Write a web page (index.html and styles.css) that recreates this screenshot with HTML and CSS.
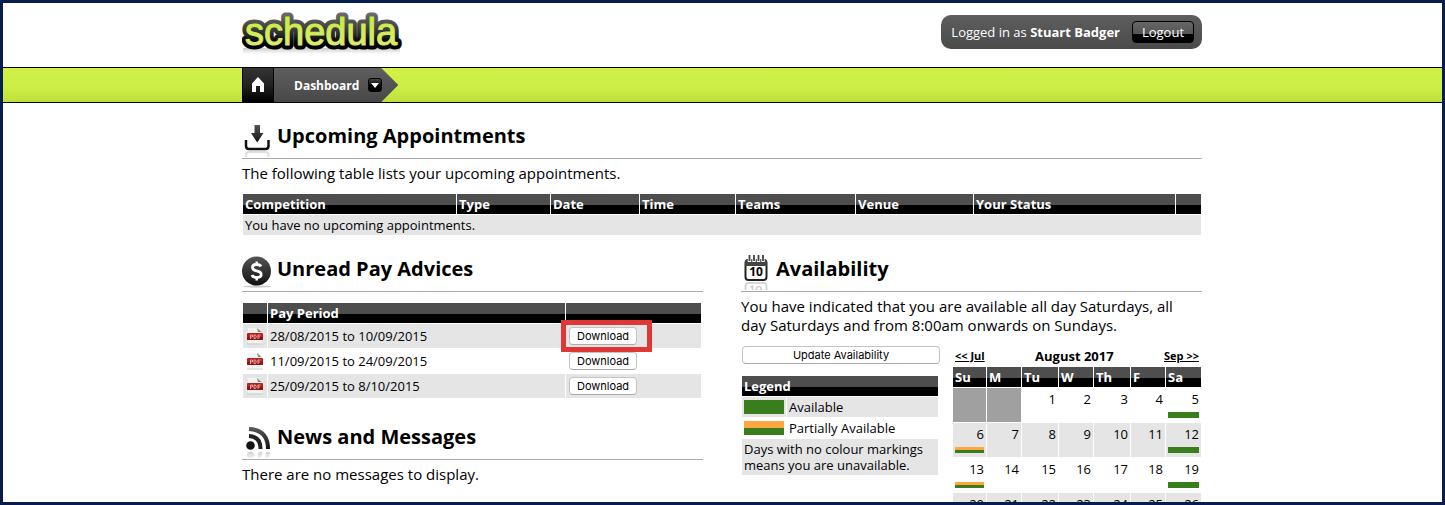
FILE: index.html
```
<!DOCTYPE html>
<html lang="en">
<head>
<meta charset="UTF-8">
<meta name="viewport" content="width=device-width, initial-scale=1.0">
<title>Schedula - Dashboard</title>
<link rel="stylesheet" href="styles.css">
</head>
<body>

<header class="header">
    <div class="wrap header-inner">
        <a class="logo" href="#" aria-label="schedula">
            <svg width="162" height="44" viewBox="0 0 162 44">
                <defs>
                    <linearGradient id="outline" gradientUnits="userSpaceOnUse" x1="0" y1="2" x2="0" y2="38">
                        <stop offset="0" stop-color="#6a6a6a"/>
                        <stop offset="0.5" stop-color="#333"/>
                        <stop offset="0.8" stop-color="#000"/>
                    </linearGradient>
                    <linearGradient id="lime" gradientUnits="userSpaceOnUse" x1="0" y1="6" x2="0" y2="33">
                        <stop offset="0" stop-color="#c8ee3c"/>
                        <stop offset="1" stop-color="#dbe873"/>
                    </linearGradient>
                    <linearGradient id="shade" x1="0" y1="0" x2="0" y2="1">
                        <stop offset="0" stop-color="#999"/>
                        <stop offset="1" stop-color="#fff"/>
                    </linearGradient>
                </defs>
                <rect x="1" y="36" width="157" height="6" fill="url(#shade)" opacity="0.5"/>
                <text class="logo-text logo-outline" x="3" y="33">schedula</text>
                <text class="logo-text logo-fill" x="3" y="33">schedula</text>
            </svg>
        </a>
        <div class="user-box">
            <span>Logged in as <b>Stuart Badger</b></span>
            <button class="logout">Logout</button>
        </div>
    </div>
</header>

<nav class="nav">
    <div class="wrap nav-inner">
        <a class="home" href="#" aria-label="Home">
            <svg width="12" height="16" viewBox="0 0 12 16"><path d="M6 0 12 6.500V15H8V9H4V15H0V6.500z" fill="#fff"/></svg>
        </a>
        <div class="crumb">
            <a href="#">Dashboard</a>
            <button class="drop" aria-label="Open menu">
                <svg width="8" height="5" viewBox="0 0 8 5"><path d="M0 0H8L4 5z" fill="#fff"/></svg>
            </button>
        </div>
    </div>
</nav>

<main class="wrap">
    <h2>
        <svg class="icon" width="30" height="35" viewBox="0 0 30 35">
            <defs>
                <linearGradient id="dark" x1="0" y1="0" x2="0" y2="1">
                    <stop offset="0" stop-color="#555"/>
                    <stop offset="1" stop-color="#111"/>
                </linearGradient>
                <linearGradient id="fade" x1="0" y1="0" x2="0" y2="1">
                    <stop offset="0" stop-color="#ccc"/>
                    <stop offset="1" stop-color="#f4f4f4"/>
                </linearGradient>
            </defs>
            <path d="M12.500 3H18V11H21.500L15.200 20.500 9 11H12.500z" fill="url(#dark)"/>
            <path d="M4 18V24Q4 27 7 27H23.500Q26.500 27 26.500 24V18" fill="none" stroke="#111" stroke-width="2.500"/>
            <path d="M4 35V33Q4 30 7 30H23.500Q26.500 30 26.500 33V35" fill="none" stroke="#ddd" stroke-width="2"/>
        </svg>
        Upcoming Appointments
    </h2>
    <p>The following table lists your upcoming appointments.</p>
    <table class="grid appointments">
        <colgroup>
            <col class="c-comp"><col class="c-type"><col class="c-date"><col class="c-time"><col class="c-teams"><col class="c-venue"><col class="c-status"><col>
        </colgroup>
        <thead>
            <tr><th>Competition</th><th>Type</th><th>Date</th><th>Time</th><th>Teams</th><th>Venue</th><th>Your Status</th><th></th></tr>
        </thead>
        <tbody>
            <tr class="odd"><td colspan="8">You have no upcoming appointments.</td></tr>
        </tbody>
    </table>

    <div class="columns">
        <div class="column">
            <section>
                <h2>
                    <svg class="icon" width="30" height="35" viewBox="0 0 30 35">
                        <ellipse cx="15" cy="31.500" rx="14" ry="1.200" fill="#ccc"/>
                        <circle cx="14.500" cy="16" r="14.500" fill="url(#dark)"/>
                        <path d="M19 11.500Q18 9.500 14.700 9.500 10.500 9.500 10.500 12.500 10.500 15 14.700 15.800 19.200 16.700 19.200 19.500 19.200 22.500 14.700 22.500 11 22.500 10 20" fill="none" stroke="#fff" stroke-width="2.800"/>
                        <path d="M14.700 6.500V10M14.700 22V25.500" stroke="#fff" stroke-width="2.400"/>
                    </svg>
                    Unread Pay Advices
                </h2>
                <table class="grid pay">
                    <colgroup><col class="c-icon"><col><col class="c-action"></colgroup>
                    <thead>
                        <tr><th></th><th>Pay Period</th><th></th></tr>
                    </thead>
                    <tbody>
                        <tr class="odd">
                            <td>
                                <svg class="pdf" width="18" height="18" viewBox="0 0 18 18">
                                    <defs>
                                        <g id="pdf">
                                            <path d="M2 1H12L16 5V16H2z" fill="#f3f3f3"/>
                                            <path d="M11 1 15.500 5H12z" fill="#888"/>
                                            <path d="M1 17H17" stroke="#ccc"/>
                                            <rect x="1" y="6" width="16" height="7" rx="1" fill="#b5201b"/>
                                            <path d="M1 10H17V12Q17 13 16 13H2Q1 13 1 12z" fill="#8d1512"/>
                                            <path d="M4.500 12V8H6.500V10H4.500M8 8V11.500H9.500L10.300 9.800 9.500 8zM12 12V8H14.500M12 10H14" fill="none" stroke="#e0a5a2"/>
                                        </g>
                                    </defs>
                                    <use href="#pdf"/>
                                </svg>
                            </td>
                            <td>28/08/2015 to 10/09/2015</td>
                            <td class="action"><button class="btn">Download</button><span class="highlight"></span></td>
                        </tr>
                        <tr>
                            <td><svg class="pdf" width="18" height="18" viewBox="0 0 18 18"><use href="#pdf"/></svg></td>
                            <td>11/09/2015 to 24/09/2015</td>
                            <td class="action"><button class="btn">Download</button></td>
                        </tr>
                        <tr class="odd">
                            <td><svg class="pdf" width="18" height="18" viewBox="0 0 18 18"><use href="#pdf"/></svg></td>
                            <td>25/09/2015 to 8/10/2015</td>
                            <td class="action"><button class="btn">Download</button></td>
                        </tr>
                    </tbody>
                </table>
            </section>

            <section>
                <h2>
                    <svg class="icon" width="30" height="35" viewBox="0 0 30 35">
                        <circle cx="8.500" cy="22.500" r="4.300" fill="#111"/>
                        <path d="M7 13Q18.500 13.500 18.500 26" fill="none" stroke="#222" stroke-width="4"/>
                        <path d="M7 6Q26 7 26 26" fill="none" stroke="url(#dark)" stroke-width="4"/>
                        <path d="M4.500 33Q5 28.500 8.500 28.500 12 28.500 12.500 33L11 35H6zM16.500 29H20.500L19 35H15.500zM24 29H28L27 35H23z" fill="url(#fade)"/>
                    </svg>
                    News and Messages
                </h2>
                <p>There are no messages to display.</p>
            </section>
        </div>

        <div class="column">
            <h2>
                <svg class="icon" width="30" height="35" viewBox="0 0 30 35">
                    <rect x="4.500" y="5" width="21" height="20" rx="3" fill="#fff" stroke="#222" stroke-width="2"/>
                    <path d="M4 11V7Q4 4 7 4H23Q26 4 26 7V11z" fill="#444"/>
                    <path d="M8.500 1V7M13 1V7M17.500 1V7M22 1V7" stroke="#fff" stroke-width="3.400"/>
                    <path d="M8.500 0V6M13 0V6M17.500 0V6M22 0V6" stroke="#444" stroke-width="1.800"/>
                    <text class="day-text" x="15" y="21" text-anchor="middle">10</text>
                    <path d="M4.500 35V31Q4.500 28 7 28H23Q25.500 28 25.500 31V35M9.500 32 11.500 31V35M15.500 35V33.500Q15.500 31.500 17.800 31.500T20 33.500V35" fill="none" stroke="#ccc" stroke-width="1.600"/>
                </svg>
                Availability
            </h2>
            <p class="summary">You have indicated that you are available all day Saturdays, all day Saturdays and from 8:00am onwards on Sundays.</p>
            <div class="availability">
                <div class="legend">
                    <button class="btn wide">Update Availability</button>
                    <table class="grid">
                        <colgroup><col class="c-swatch"><col></colgroup>
                        <thead>
                            <tr><th colspan="2">Legend</th></tr>
                        </thead>
                        <tbody>
                            <tr class="odd"><td class="key"><span class="swatch full"></span></td><td>Available</td></tr>
                            <tr><td class="key"><span class="swatch part"></span></td><td>Partially Available</td></tr>
                            <tr class="odd"><td class="note" colspan="2">Days with no colour markings means you are unavailable.</td></tr>
                        </tbody>
                    </table>
                </div>
                <div class="calendar">
                    <div class="month">
                        <a href="#">&lt;&lt; Jul</a>
                        <h3>August 2017</h3>
                        <a href="#">Sep &gt;&gt;</a>
                    </div>
                    <table class="grid days">
                        <colgroup><col class="d33"><col class="d34"><col class="d36"><col class="d34"><col class="d36"><col class="d34"><col></colgroup>
                        <thead>
                            <tr><th>Su</th><th>M</th><th>Tu</th><th>W</th><th>Th</th><th>F</th><th>Sa</th></tr>
                        </thead>
                        <tbody>
                            <tr><td class="blank"></td><td class="blank"></td><td>1</td><td>2</td><td>3</td><td>4</td><td>5<span class="bar full"></span></td></tr>
                            <tr class="odd"><td>6<span class="bar part"></span></td><td>7</td><td>8</td><td>9</td><td>10</td><td>11</td><td>12<span class="bar full"></span></td></tr>
                            <tr><td>13<span class="bar part"></span></td><td>14</td><td>15</td><td>16</td><td>17</td><td>18</td><td>19<span class="bar full"></span></td></tr>
                            <tr class="odd"><td>20<span class="bar part"></span></td><td>21</td><td>22</td><td>23</td><td>24</td><td>25</td><td>26<span class="bar full"></span></td></tr>
                        </tbody>
                    </table>
                </div>
            </div>
        </div>
    </div>
</main>

</body>
</html>
```
FILE: styles.css
```
* {
    box-sizing: border-box;
}

body {
    margin: 0;
    height: 100vh;
    overflow: hidden;
    border: 3px solid #071d4f;
    background: #fff;
    color: #000;
    font-family: "Trebuchet MS", "Open Sans", sans-serif;
    font-size: 15px;
    line-height: 19px;
}

a {
    color: inherit;
}

button {
    font-family: inherit;
    cursor: pointer;
}

.wrap {
    max-width: 961px;
    margin: 0 auto;
    padding-right: 1px;
}

/* header */
.header-inner {
    display: flex;
    justify-content: space-between;
    align-items: flex-start;
    height: 64px;
    padding-top: 9px;
}

.logo svg {
    display: block;
}

.logo-text {
    font-family: "Liberation Sans", Arial, sans-serif;
    font-size: 38px;
    stroke-linejoin: round;
}

.logo-outline {
    fill: url(#outline);
    stroke: url(#outline);
    stroke-width: 9px;
}

.logo-fill {
    fill: url(#lime);
    stroke: url(#lime);
    stroke-width: 1px;
}

.user-box {
    display: flex;
    align-items: center;
    gap: 12px;
    height: 34px;
    margin-top: 3px;
    padding: 0 8px 0 10px;
    border-radius: 10px;
    background: linear-gradient(#5e5e5e, #4a4a4a);
    color: #fff;
    font-size: 13px;
}

.logout {
    width: 62px;
    height: 22px;
    padding: 0;
    border: 1px solid #000;
    border-radius: 4px;
    background: linear-gradient(#666, #555 60%, #000 60%);
    color: #fff;
    font-size: 13px;
    line-height: 18px;
}

/* nav */
.nav {
    border-top: 1px solid #000;
    border-bottom: 1px solid #000;
    background: linear-gradient(#d1f148, #cbed45 60%, #bde03f);
}

.nav-inner {
    display: flex;
    height: 34px;
}

.home {
    display: flex;
    align-items: center;
    justify-content: center;
    width: 32px;
    border-right: 1px solid #000;
    border-left: 1px solid #000;
    background: linear-gradient(#333, #222 50%, #000);
}

.crumb {
    display: flex;
    align-items: center;
    gap: 9px;
    padding: 0 16px 0 20px;
    background: linear-gradient(#5e5e5e, #484848);
    clip-path: polygon(0 0, calc(100% - 17px) 0, 100% 50%, calc(100% - 17px) 100%, 0 100%);
    color: #fff;
    font-size: 12px;
    font-weight: bold;
}

.crumb a {
    text-decoration: none;
}

.drop {
    display: flex;
    align-items: center;
    justify-content: center;
    width: 14px;
    height: 14px;
    padding: 0;
    border: 1px solid #000;
    border-radius: 3px;
    background: linear-gradient(#444, #000 60%);
}

/* headings */
h2 {
    display: flex;
    align-items: center;
    gap: 5px;
    height: 37px;
    margin: 19px 0 0;
    padding-bottom: 8px;
    border-bottom: 1px solid #aaa;
    font-size: 20px;
    line-height: 26px;
}

.icon {
    align-self: flex-start;
    flex: none;
}

.day-text {
    font-size: 12px;
    font-weight: bold;
}

p {
    margin: 5px 0 10px;
}

.summary {
    padding-right: 12px;
}

/* tables */
.grid {
    width: 100%;
    border-spacing: 1px;
    table-layout: fixed;
    font-size: 13px;
    line-height: 16px;
}

.grid th {
    height: 20px;
    padding: 2px;
    background: linear-gradient(#4e4e4e 11px, #000 11px);
    color: #fff;
    text-align: left;
}

.grid td {
    height: 20px;
    padding: 2px;
}

.odd td {
    background: #e5e5e5;
}

.c-comp { width: 213px; }
.c-type { width: 93px; }
.c-date { width: 88px; }
.c-time { width: 95px; }
.c-teams { width: 119px; }
.c-venue { width: 117px; }
.c-status { width: 201px; }
.c-icon { width: 24px; }
.c-action { width: 135px; }
.c-swatch { width: 44px; }
.d33 { width: 33px; }
.d34 { width: 34px; }
.d36 { width: 36px; }

.columns {
    display: grid;
    grid-template-columns: 1fr 1fr;
    gap: 38px;
}

.pay {
    width: calc(100% - 1px);
    margin: 10px 0 24px;
}

.pay td {
    height: 24px;
}

.pdf {
    display: block;
    margin: 0 auto;
}

.grid .action {
    position: relative;
    padding: 0 3px;
}

section + section h2 {
    margin-top: 0;
}

.btn {
    display: block;
    width: 68px;
    height: 18px;
    padding: 0;
    border: 1px solid #c4c4c4;
    border-bottom-color: #aaa;
    border-radius: 4px;
    background: #fff;
    color: #000;
    font-family: Inter, sans-serif;
    font-size: 11px;
    line-height: 14px;
}

/* marks the button to press */
.highlight {
    position: absolute;
    top: -4px;
    left: -5px;
    width: 91px;
    height: 32px;
    border: 5px solid #e03636;
    pointer-events: none;
}

/* availability */
.availability {
    display: flex;
    justify-content: space-between;
}

.legend {
    width: 198px;
}

.legend .wide {
    width: 100%;
    margin: 1px 0 11px 1px;
}

.grid .key {
    padding: 2px;
}

.swatch {
    display: block;
    width: 40px;
    height: 14px;
}

.full {
    background: #3a7d1c;
}

.part {
    background: linear-gradient(#ffa640 50%, #3a7d1c 50%);
}

.calendar {
    width: 250px;
}

.month {
    display: flex;
    align-items: center;
    justify-content: space-between;
    height: 21px;
    padding: 0 3px;
    font-size: 11px;
    font-weight: bold;
    line-height: 14px;
}

.month h3 {
    margin: 0;
    font-size: 13px;
}

.days td {
    height: 34px;
    padding: 3px 2px;
    text-align: right;
    vertical-align: top;
}

.days .blank {
    background: #a0a0a0;
}

.bar {
    display: block;
    height: 6px;
    margin-top: 5px;
}
```
